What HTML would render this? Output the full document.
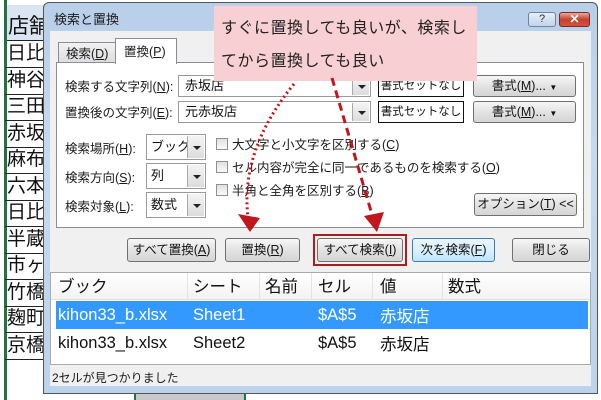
<!DOCTYPE html>
<html><head><meta charset="utf-8"><style>
*{margin:0;padding:0;box-sizing:border-box}
body{width:601px;height:400px;overflow:hidden;background:#fff;position:relative;font-family:"Liberation Sans","Noto Sans CJK JP",sans-serif;color:#111}
.a{position:absolute}
.cell{position:absolute;left:5px;width:40px;height:27px;border-bottom:1px solid #222;font-size:19px;line-height:26px;padding-left:2px;overflow:hidden;white-space:nowrap}
.t{position:absolute;font-size:12.5px;white-space:nowrap;color:#1a1a1a;line-height:16px}
.inp{position:absolute;background:#fff;border:1px solid #9a9a9a;font-size:13px;padding-left:6px;line-height:20px;overflow:hidden;white-space:nowrap}
.dd{position:absolute;right:1px;top:1px;bottom:1px;width:17px;background:linear-gradient(#f4f4f4,#dcdcdc);border-left:1px solid #aaa}
.dd:after{content:"";position:absolute;left:5px;top:45%;border:4px solid transparent;border-top:4px solid #222;border-bottom:0}
.btn{position:absolute;border:1px solid #707070;border-radius:3px;background:linear-gradient(#f6f6f6,#e3e3e3 50%,#d5d5d5);font-size:12.5px;text-align:center;line-height:22px;height:24px;white-space:nowrap}
.cb{position:absolute;width:12px;height:12px;border:1px solid #8e8f8f;background:linear-gradient(#e0e0e0,#fafafa)}
u{text-decoration:underline}
.lt{position:absolute;font-size:16.5px;white-space:nowrap;line-height:20px;height:20px}
.fmt{position:absolute;width:86px;height:22px;border:1px solid #111;background:#fff;font-size:11.5px;text-align:center;line-height:20px;white-space:nowrap;overflow:hidden}
</style></head><body>
<div class="a" style="left:4px;top:0;width:3px;height:400px;background:#217346"></div>
<div class="a" style="left:7px;top:5px;width:38px;height:36px;background:#dbe5f1;border-bottom:1px solid #222"></div>
<div class="a" style="left:8px;top:10px;font-size:21px">店舗</div>
<div class="cell" style="top:41px">日比谷</div>
<div class="cell" style="top:68px">神谷町</div>
<div class="cell" style="top:94px">三田町</div>
<div class="cell" style="top:121px">赤坂店</div>
<div class="cell" style="top:147px">麻布十</div>
<div class="cell" style="top:174px">六本木</div>
<div class="cell" style="top:200px">日比谷</div>
<div class="cell" style="top:227px">半蔵門</div>
<div class="cell" style="top:253px">市ヶ谷</div>
<div class="cell" style="top:280px">竹橋店</div>
<div class="cell" style="top:306px">麹町店</div>
<div class="cell" style="top:333px">京橋店</div>
<div class="a" style="left:134px;top:392px;width:112px;height:8px;background:#c8c8c8;border-left:2px solid #217346;border-right:2px solid #217346"></div>
<div class="a" style="left:43px;top:2px;width:555px;height:392px;background:linear-gradient(#b8cfe9,#c6d9ef 40%,#bcd3ec);border:1px solid #555;border-radius:6px 6px 0 0"></div>
<div class="t" style="left:54px;top:12px;font-size:13px">検索と置換</div>
<div class="a" style="left:528px;top:12px;width:28px;height:15px;border:1px solid #6d83a6;border-radius:3px;background:linear-gradient(#e6eef8,#c4d4ea);font-size:11px;text-align:center;line-height:13px;color:#333">?</div>
<div class="a" style="left:559px;top:12px;width:31px;height:15px;border:1px solid #7a2a1e;border-radius:3px;background:linear-gradient(#e9a99b,#c6402d 50%,#d2553f);font-size:12px;color:#fff;text-align:center;line-height:13px;font-weight:bold">✕</div>
<div class="a" style="left:50px;top:31px;width:541px;height:355px;background:#f0f0f0"></div>
<div class="a" style="left:58px;top:42px;width:58px;height:21px;border:1px solid #898c95;border-bottom:none;background:linear-gradient(#f2f2f2,#dcdcdc)"></div>
<div class="t" style="left:66px;top:46px">検索(<u>D</u>)</div>
<div class="a" style="left:56px;top:62px;width:528px;height:166px;background:#fff;border:1px solid #898c95"></div>
<div class="a" style="left:115px;top:38px;width:62px;height:26px;border:1px solid #898c95;border-bottom:none;background:#fff"></div>
<div class="t" style="left:124px;top:44px">置換(<u>P</u>)</div>
<div class="t" style="left:65px;top:79px">検索する文字列(<u>N</u>):</div>
<div class="inp" style="left:178px;top:75px;width:193px;height:22px">赤坂店<div class="dd"></div></div>
<div class="fmt" style="left:378px;top:75px">書式セットなし</div>
<div class="btn" style="left:473px;top:75px;width:103px;height:22px;line-height:20px">書式(<u>M</u>)... <span style="font-size:8px">▼</span></div>
<div class="t" style="left:65px;top:105px">置換後の文字列(<u>E</u>):</div>
<div class="inp" style="left:178px;top:101px;width:193px;height:22px">元赤坂店<div class="dd"></div></div>
<div class="fmt" style="left:378px;top:101px">書式セットなし</div>
<div class="btn" style="left:473px;top:101px;width:103px;height:22px;line-height:20px">書式(<u>M</u>)... <span style="font-size:8px">▼</span></div>
<div class="t" style="left:65px;top:141px">検索場所(<u>H</u>):</div>
<div class="inp" style="left:146px;top:134px;width:60px;height:26px;line-height:24px;padding-left:4px">ブック<div class="dd"></div></div>
<div class="t" style="left:65px;top:170px">検索方向(<u>S</u>):</div>
<div class="inp" style="left:146px;top:163px;width:60px;height:26px;line-height:24px;padding-left:4px">列<div class="dd"></div></div>
<div class="t" style="left:65px;top:199px">検索対象(<u>L</u>):</div>
<div class="inp" style="left:146px;top:192px;width:60px;height:26px;line-height:24px;padding-left:4px">数式<div class="dd"></div></div>
<div class="cb" style="left:216px;top:138px"></div><div class="t" style="left:232px;top:137px">大文字と小文字を区別する(<u>C</u>)</div>
<div class="cb" style="left:216px;top:161px"></div><div class="t" style="left:232px;top:160px">セル内容が完全に同一であるものを検索する(<u>O</u>)</div>
<div class="cb" style="left:216px;top:184px"></div><div class="t" style="left:232px;top:183px">半角と全角を区別する(<u>B</u>)</div>
<div class="btn" style="left:474px;top:193px;width:103px;height:23px;line-height:21px">オプション(<u>T</u>) &lt;&lt;</div>
<div class="btn" style="left:127px;top:238px;width:89px">すべて置換(<u>A</u>)</div>
<div class="btn" style="left:225px;top:238px;width:75px">置換(<u>R</u>)</div>
<div class="a" style="left:313px;top:234px;width:94px;height:32px;border:2px solid #b01c1c"></div>
<div class="btn" style="left:317px;top:238px;width:86px">すべて検索(<u>I</u>)</div>
<div class="btn" style="left:412px;top:238px;width:83px;border-color:#3c7fb1;background:linear-gradient(#eaf6fd,#d9f0fc 50%,#bee6fd)">次を検索(<u>F</u>)</div>
<div class="btn" style="left:512px;top:238px;width:78px">閉じる</div>
<div class="a" style="left:50px;top:272px;width:541px;height:93px;background:#fff;border:1px solid #aaa"></div>
<div class="a" style="left:51px;top:273px;width:539px;height:27px;background:linear-gradient(#fff,#f3f3f3);border-bottom:1px solid #e0e0e0"></div>
<div class="a" style="left:187px;top:273px;width:1px;height:27px;background:#e3e3e3"></div>
<div class="a" style="left:259px;top:273px;width:1px;height:27px;background:#e3e3e3"></div>
<div class="a" style="left:311px;top:273px;width:1px;height:27px;background:#e3e3e3"></div>
<div class="a" style="left:372px;top:273px;width:1px;height:27px;background:#e3e3e3"></div>
<div class="a" style="left:442px;top:273px;width:1px;height:27px;background:#e3e3e3"></div>
<div class="lt" style="left:58px;top:277px">ブック</div>
<div class="lt" style="left:193px;top:277px">シート</div>
<div class="lt" style="left:265px;top:277px">名前</div>
<div class="lt" style="left:318px;top:277px">セル</div>
<div class="lt" style="left:380px;top:277px">値</div>
<div class="lt" style="left:448px;top:277px">数式</div>
<div class="a" style="left:56px;top:301px;width:532px;height:28px;background:#3399ff"></div>
<div class="lt" style="left:58px;top:305px;color:#fff">kihon33_b.xlsx</div>
<div class="lt" style="left:193px;top:305px;color:#fff">Sheet1</div>
<div class="lt" style="left:318px;top:305px;color:#fff">$A$5</div>
<div class="lt" style="left:380px;top:305px;color:#fff;font-family:'Noto Sans CJK JP',sans-serif">赤坂店</div>
<div class="lt" style="left:58px;top:333px">kihon33_b.xlsx</div>
<div class="lt" style="left:193px;top:333px">Sheet2</div>
<div class="lt" style="left:318px;top:333px">$A$5</div>
<div class="lt" style="left:380px;top:333px;font-family:'Noto Sans CJK JP',sans-serif">赤坂店</div>
<div class="t" style="left:52px;top:370px;font-size:12px">2セルが見つかりました</div>
<div class="a" style="left:214px;top:6px;width:263px;height:75px;background:#f8d0d3;font-size:16px;line-height:33px;padding:6px 0 0 7px;color:#222;letter-spacing:0.5px">すぐに置換しても良いが、検索し<br>てから置換しても良い</div>
<svg class="a" style="left:0;top:0" width="601" height="400">
<path d="M294 84 Q240 150 248 218" fill="none" stroke="#c0161c" stroke-width="3" stroke-dasharray="2 3"/>
<polygon points="238,214 260,218 250,232" fill="#c0161c"/>
<path d="M332 78 L373 218" fill="none" stroke="#c0161c" stroke-width="3" stroke-dasharray="8 5"/>
<polygon points="364,216 384,212 377,232" fill="#c0161c"/>
</svg>
</body></html>
